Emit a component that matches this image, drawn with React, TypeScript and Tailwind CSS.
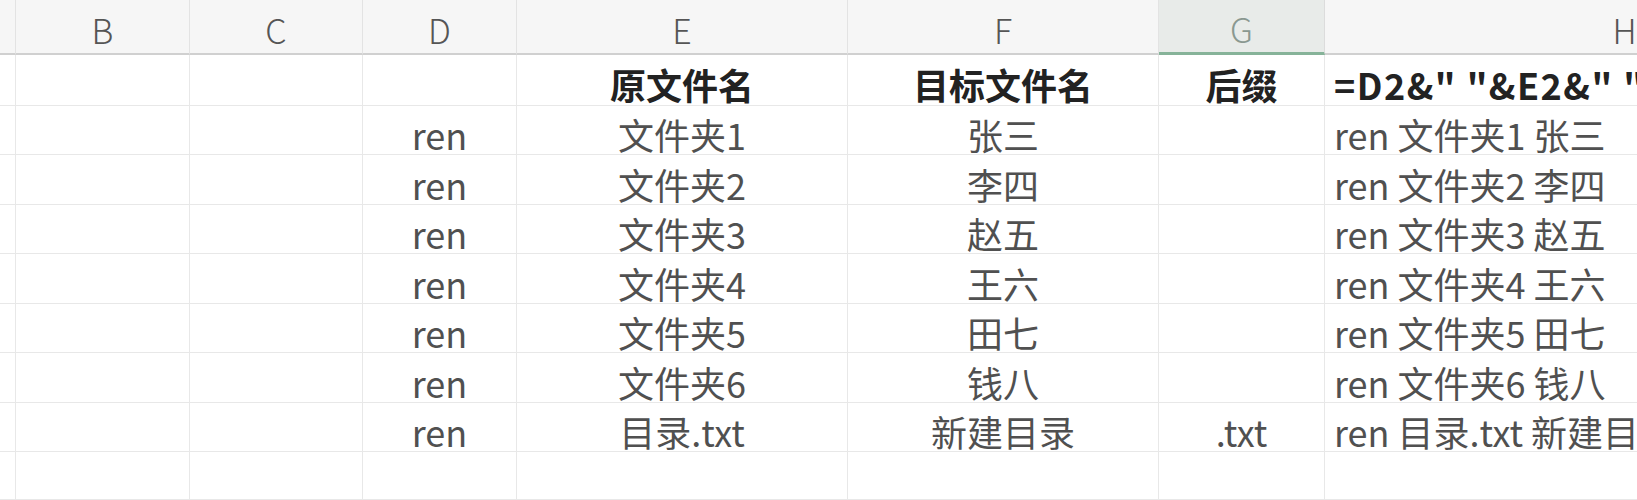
import React from "react";

const COLS = ["", "B", "C", "D", "E", "F", "G", "H"];

const ROW_H = [
  "h-[51px]",
  "h-[49px]",
  "h-[50px]",
  "h-[49px]",
  "h-[50px]",
  "h-[49px]",
  "h-[50px]",
  "h-[49px]",
  "h-[48px]",
];

const DATA: string[][] = [
  ["", "", "", "", "原文件名", "目标文件名", "后缀", "=D2&\" \"&E2&\" \"&F2&G2"],
  ["", "", "", "ren", "文件夹1", "张三", "", "ren 文件夹1 张三"],
  ["", "", "", "ren", "文件夹2", "李四", "", "ren 文件夹2 李四"],
  ["", "", "", "ren", "文件夹3", "赵五", "", "ren 文件夹3 赵五"],
  ["", "", "", "ren", "文件夹4", "王六", "", "ren 文件夹4 王六"],
  ["", "", "", "ren", "文件夹5", "田七", "", "ren 文件夹5 田七"],
  ["", "", "", "ren", "文件夹6", "钱八", "", "ren 文件夹6 钱八"],
  ["", "", "", "ren", "目录.txt", "新建目录", ".txt", "ren 目录.txt 新建目录.txt"],
  ["", "", "", "", "", "", "", ""],
];

const font = {
  fontFamily: '"Noto Sans CJK SC", "Liberation Sans", sans-serif',
};

export default function App() {
  return (
    <div
      className="w-[1637px] h-[500px] overflow-hidden bg-white"
      style={font}
    >
      <div className="grid grid-cols-[16px_174px_173px_154px_331px_311px_166px_600px] w-[1925px]">
        {COLS.map((c, i) => (
          <div
            key={"h" + i}
            className={
              i === 6
                ? "h-[55px] flex items-center justify-center border-r border-[#dcdcdc] border-b-[3px] border-b-[#86b399] bg-[#e8ebe9] text-[34px] font-light text-[#8a9890] leading-none pt-[6px]"
                : "h-[55px] flex items-center justify-center border-r border-[#e3e3e3] border-b-[2px] border-b-[#d0d0d0] bg-[#f6f6f6] text-[34px] font-light text-[#555555] leading-none pt-[6px]"
            }
          >
            {c}
          </div>
        ))}
        {DATA.map((row, r) =>
          row.map((v, ci) => {
            const h = ROW_H[r];
            const bold = r === 0;
            let cls =
              "flex items-center border-r border-b border-[#e8e8e8] text-[36px] leading-none whitespace-nowrap overflow-visible pt-[8px] ";
            cls += h + " ";
            if (ci === 7) cls += "justify-start pl-[9px] ";
            else cls += "justify-center ";
            if (ci === 7 && bold) cls += "tracking-[1.5px] ";
            cls += bold
              ? "font-bold text-[#222222] "
              : "font-normal text-[#505050] ";
            return (
              <div key={r + "-" + ci} className={cls}>
                {v}
              </div>
            );
          })
        )}
      </div>
    </div>
  );
}
